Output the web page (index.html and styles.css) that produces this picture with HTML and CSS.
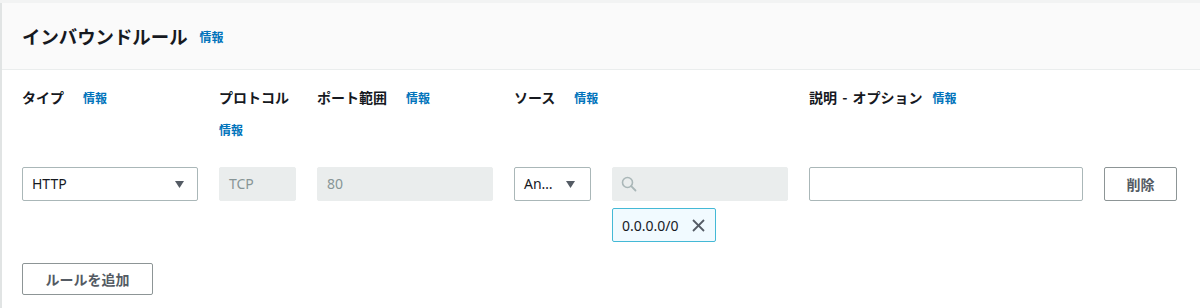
FILE: index.html
```html
<!DOCTYPE html>
<html lang="ja">
<head>
<meta charset="utf-8">
<title>インバウンドルール</title>
<link rel="stylesheet" href="styles.css">
</head>
<body>
<div class="panel">
  <div class="panel-header">
    <h2 class="title">インバウンドルール</h2>
    <a class="info info-title" href="#">情報</a>
  </div>
  <div class="panel-body">
    <div class="rules">
      <div class="label"><span>タイプ</span><a class="info" href="#">情報</a></div>
      <div class="label"><span>プロトコル</span><a class="info" href="#">情報</a></div>
      <div class="label"><span>ポート範囲</span><a class="info" href="#">情報</a></div>
      <div class="label label-source"><span>ソース</span><a class="info" href="#">情報</a></div>
      <div class="label label-desc"><span>説明 - オプション</span><a class="info" href="#">情報</a></div>
      <div class="label-empty"></div>

      <div class="field select"><span class="select-text">HTTP</span>
        <svg class="caret" width="9" height="7" viewBox="0 0 9 7"><polygon points="0,0 9,0 4.5,7" fill="#545b64"/></svg>
      </div>
      <div class="field disabled">TCP</div>
      <div class="field disabled">80</div>
      <div class="field select select-small"><span class="select-text">An…</span>
        <svg class="caret" width="9" height="7" viewBox="0 0 9 7"><polygon points="0,0 9,0 4.5,7" fill="#545b64"/></svg>
      </div>
      <div class="field disabled search">
        <svg width="16" height="16" viewBox="0 0 16 16"><circle cx="6.5" cy="6.5" r="5" fill="none" stroke="#aab7b8" stroke-width="1.6"/><line x1="10.2" y1="10.2" x2="14.5" y2="14.5" stroke="#aab7b8" stroke-width="1.8" stroke-linecap="round"/></svg>
      </div>
      <div class="field text"></div>
      <button class="btn btn-delete" type="button">削除</button>

      <div class="chip-cell">
        <div class="chip"><span>0.0.0.0/0</span>
          <svg width="13" height="13" viewBox="0 0 13 13"><line x1="1" y1="1" x2="12" y2="12" stroke="#545b64" stroke-width="1.8"/><line x1="12" y1="1" x2="1" y2="12" stroke="#545b64" stroke-width="1.8"/></svg>
        </div>
      </div>
    </div>
    <button class="btn btn-add" type="button">ルールを追加</button>
  </div>
</div>
</body>
</html>
```

FILE: styles.css
```css
html, body {
  margin: 0;
  padding: 0;
}
body {
  background: #f2f3f3;
  font-family: "Noto Sans", "Noto Sans CJK JP", sans-serif;
  color: #16191f;
}
.panel {
  margin-top: 3px;
  background: #ffffff;
  border-left: 2px solid #e1e4e4;
  min-height: calc(100vh - 3px);
}
.panel-header {
  height: 66px;
  background: #fafafa;
  border-bottom: 1px solid #eaeded;
  display: flex;
  align-items: center;
  padding: 0 20px;
}
.title {
  margin: 0;
  font-size: 18.4px;
  font-weight: 700;
  line-height: 22px;
  font-family: "Noto Sans CJK JP", sans-serif;
}
.info {
  color: #0073bb;
  font-size: 12px;
  font-weight: 700;
  text-decoration: none;
  font-family: "Noto Sans CJK JP", sans-serif;
  line-height: 18px;
}
.info-title {
  margin-left: 12px;
  margin-top: 2px;
}
.panel-body {
  padding: 18px 20px 0 20px;
}
.rules {
  display: grid;
  grid-template-columns: 176px 77px 176px 77px 176px 274px 73px;
  column-gap: 21px;
  align-items: start;
}
.label {
  display: flex;
  flex-wrap: wrap;
  align-items: baseline;
  column-gap: 19px;
  row-gap: 15px;
  font-size: 14px;
  font-weight: 700;
  line-height: 18px;
  font-family: "Noto Sans CJK JP", sans-serif;
  margin-bottom: 28px;
}
.label-source {
  grid-column: span 2;
}
.label-desc {
  column-gap: 10px;
}
.label-desc span {
  word-spacing: 2px;
}
.field {
  box-sizing: border-box;
  height: 34px;
  border-radius: 2px;
  font-size: 14px;
  line-height: 20px;
  padding: 6px 9px;
  display: flex;
  align-items: center;
}
.select {
  border: 1px solid #aab7b8;
  background: #ffffff;
  justify-content: space-between;
  padding-right: 13px;
  color: #16191f;
}
.select-small {
  padding-right: 15px;
}
.caret {
  margin-top: 1px;
}
.disabled {
  border: 1px solid #eaeded;
  background: #eaeded;
  color: #879596;
}
.search {
  padding-left: 8px;
}
.text {
  border: 1px solid #aab7b8;
  background: #ffffff;
}
.btn {
  box-sizing: border-box;
  background: #ffffff;
  border: 1px solid #8d9596;
  border-radius: 2px;
  color: #545b64;
  font-family: "Noto Sans CJK JP", sans-serif;
  font-size: 14px;
  font-weight: 700;
  padding: 0;
  cursor: pointer;
}
.btn-delete {
  height: 34px;
}
.chip-cell {
  grid-column: 5;
  padding-top: 7px;
}
.chip {
  box-sizing: border-box;
  width: 104px;
  height: 34px;
  display: flex;
  align-items: center;
  justify-content: space-between;
  padding: 0 10px 0 9px;
  background: #f1faff;
  border: 1px solid #44b9d6;
  border-radius: 2px;
  font-size: 14px;
  color: #16191f;
}
.btn-add {
  display: block;
  margin-top: 21px;
  width: 131px;
  height: 32px;
}
```
